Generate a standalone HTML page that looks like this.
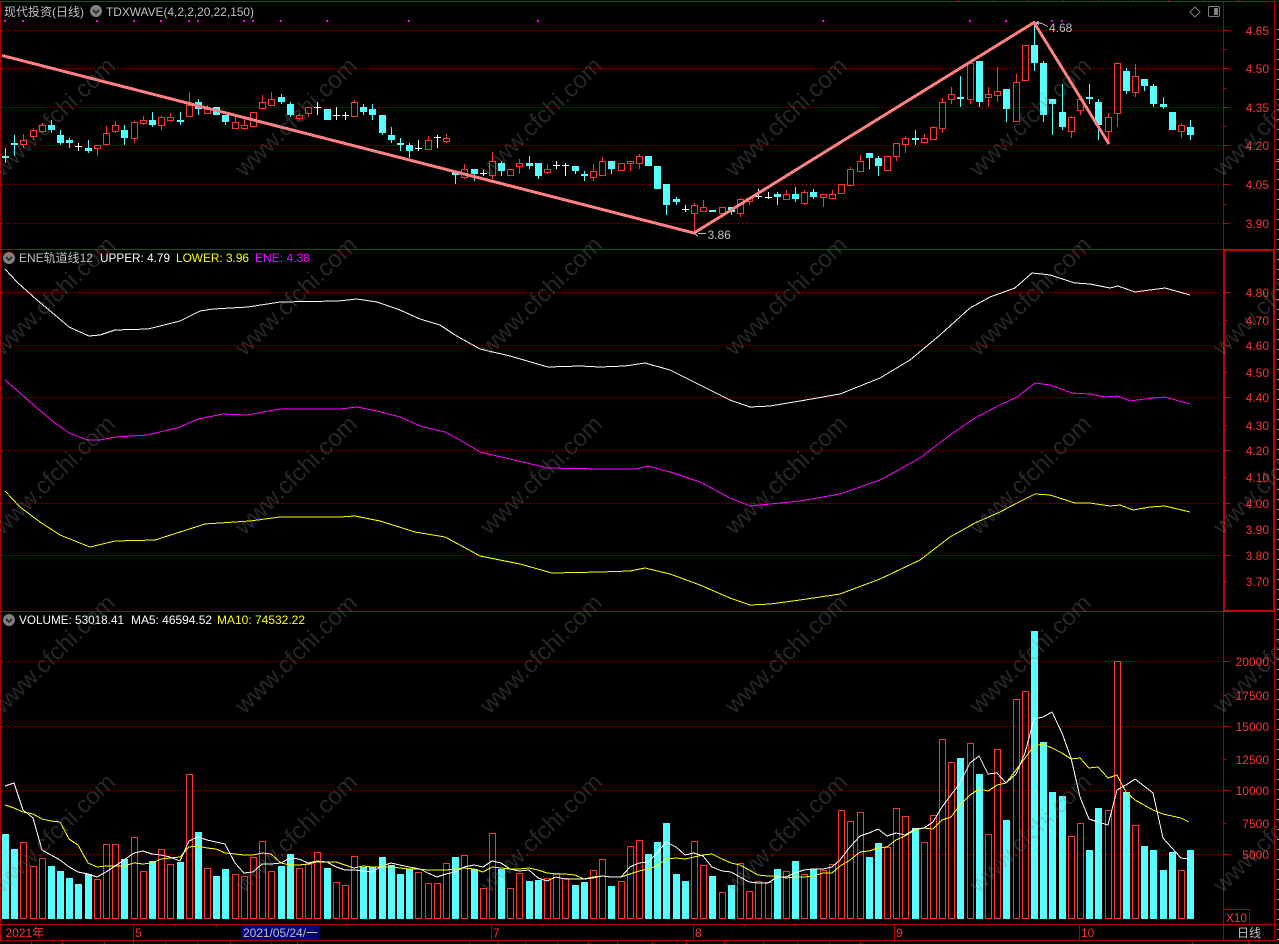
<!DOCTYPE html>
<html lang="zh-CN">
<head>
<meta charset="utf-8">
<title>现代投资(日线)</title>
<style>
html,body{margin:0;padding:0;background:#000;width:1279px;height:944px;overflow:hidden}
svg{display:block;position:absolute;left:0;top:0}
text{font-family:"Liberation Sans","Noto Sans CJK SC",sans-serif;font-size:12px}
.wm text{font-size:24px}
</style>
</head>
<body>
<svg width="1279" height="944" viewBox="0 0 1279 944" xmlns="http://www.w3.org/2000/svg" shape-rendering="crispEdges">
<rect width="1279" height="944" fill="#000"/>

<!-- grid dotted -->
<path fill="none" stroke="#b40000" stroke-dasharray="1 3" d="M2 30.5H1220M2 68.5H1220M2 107.5H1220M2 145.5H1220M2 184.5H1220M2 223.5H1220M2 292.5H1220M2 345.5H1220M2 397.5H1220M2 450.5H1220M2 503.5H1220M2 555.5H1220M2 661.5H1220M2 726.5H1220M2 790.5H1220M2 854.5H1220"/>

<!-- frame -->
<path fill="none" stroke="#a80000" d="M0 1.5H1275M.5 1V941M0 249.5H1224M0 611.5H1224M1223.5 1V941M1274.5 1V941M0 924.5H1275M0 940.5H1275M1224 909.5H1249.5V924M133.5 925V940M491.5 925V940M693.5 925V940M894.5 925V940M1079.5 925V940M1192.5 941V944M1248.5 941V944M174.5 925V927M216.5 925V927M346.5 925V927M395.5 925V927M443.5 925V927M542.5 925V927M643.5 925V927M744.5 925V927M794.5 925V927M941.5 925V927M988.5 925V927M31.5 941V944M62.5 941V944M104.5 941V944M133.5 941V944M165.5 941V944M197.5 941V944M230.5 941V944M271.5 941V944M297.5 941V944M469.5 941V944M498.5 941V944M525.5 941V944M557.5 941V944M588.5 941V944M617.5 941V944M652.5 941V944M686.5 941V944M724.5 941V944M763.5 941V944M797.5 941V944M829.5 941V944M860.5 941V944"/>
<path fill="none" stroke="#a80000" stroke-dasharray="1 34" d="M958 .5H1275"/>
<rect x="1224" y="250" width="50" height="361" fill="none" stroke="#c40000" stroke-width="2"/>

<!-- axis ticks -->
<path fill="none" stroke="#c80000" d="M1224 30.5h5M1224 49.5h2M1224 68.5h5M1224 88.5h2M1224 107.5h5M1224 126.5h2M1224 145.5h5M1224 165.5h2M1224 184.5h5M1224 204.5h2M1224 223.5h5M1225 292.5h5M1225 320.5h2M1225 345.5h5M1225 372.5h2M1225 397.5h5M1225 425.5h2M1225 450.5h5M1225 477.5h2M1225 503.5h5M1225 529.5h2M1225 555.5h5M1225 581.5h2M1224 661.5h5M1224 695.5h2M1224 726.5h5M1224 759.5h2M1224 790.5h5M1224 823.5h2M1224 854.5h5"/>
<path fill="none" stroke="#b0b0b0" stroke-width="2" stroke-dasharray="1 9" d="M1278 29V941"/>
<path fill="none" stroke="#e0a000" d="M1276 161.5h3"/>

<!-- magenta dots -->
<path fill="#ff00ff" d="M4 20h2v2h-2zM22 20h2v2h-2zM96 20h2v2h-2zM133 20h2v2h-2zM160 20h2v2h-2zM188 20h2v2h-2zM197 20h2v2h-2zM243 20h2v2h-2zM252 20h2v2h-2zM280 20h2v2h-2zM326 20h2v2h-2zM408 20h2v2h-2zM537 20h2v2h-2zM822 20h2v2h-2zM969 20h2v2h-2zM1005 20h2v2h-2zM1051 20h2v2h-2zM1061 20h2v2h-2z"/>

<!-- candles: cyan -->
<path fill="none" stroke="#55ffff" d="M5.5 148V163M14.5 135V156M51.5 120V133M60.5 130V145M69.5 138V148M88.5 140V153M124.5 125V145M152.5 112V127M180.5 112V125M198.5 99V115M225.5 115V125M281.5 94V104M290.5 102V117M363.5 104V115M372.5 104V120M382.5 115V135M391.5 127V143M400.5 138V151M409.5 143V158M455.5 172V184M474.5 169V181M501.5 161V176M529.5 156V169M538.5 163V179M575.5 166V174M584.5 171V181M611.5 161V174M666.5 184V215M676.5 197V205M731.5 207V215M777.5 192V205M795.5 187V202M813.5 189V199M869.5 153V169M878.5 156V176M915.5 130V145M960.5 76V107M979.5 61V107M1006.5 89V122M1034.5 22V71M1043.5 61V122M1052.5 99V135M1062.5 84V130M1089.5 84V104M1098.5 99V140M1126.5 68V94M1144.5 79V91M1153.5 84V107M1163.5 97V109M1190.5 120V140"/>
<path fill="#55ffff" d="M2 156h7v2h-7zM11 143h7v2h-7zM48 125h7v5h-7zM57 135h7v8h-7zM66 140h7v3h-7zM85 148h7v3h-7zM121 130h7v8h-7zM149 120h7v5h-7zM177 120h7v2h-7zM195 102h7v7h-7zM213 107h7v8h-7zM222 115h7v7h-7zM278 97h7v5h-7zM287 104h7v11h-7zM324 109h7v11h-7zM360 107h7v5h-7zM369 109h7v6h-7zM379 115h7v18h-7zM388 135h7v5h-7zM397 143h7v2h-7zM406 145h7v6h-7zM452 172h7v3h-7zM471 169h7v5h-7zM498 163h7v8h-7zM526 163h7v3h-7zM535 163h7v13h-7zM572 166h7v5h-7zM581 174h7v2h-7zM608 161h7v8h-7zM645 156h7v10h-7zM654 166h7v23h-7zM663 184h7v21h-7zM673 199h7v3h-7zM709 210h7v2h-7zM728 207h7v5h-7zM774 194h7v3h-7zM792 194h7v5h-7zM810 192h7v5h-7zM866 153h7v5h-7zM875 158h7v8h-7zM912 138h7v2h-7zM957 97h7v2h-7zM976 61h7v41h-7zM1003 89h7v20h-7zM1031 45h7v18h-7zM1040 63h7v52h-7zM1049 99h7v5h-7zM1059 112h7v15h-7zM1086 97h7v2h-7zM1095 102h7v23h-7zM1123 71h7v20h-7zM1141 79h7v7h-7zM1150 86h7v18h-7zM1160 104h7v3h-7zM1169 112h7v18h-7zM1187 127h7v8h-7z"/>

<!-- candles: white cross -->
<path fill="none" stroke="#ffffff" d="M78.5 143V151M75 146.5h7M317.5 102V115M314 107.5h7M336.5 107V120M333 115.5h7M345.5 112V120M342 115.5h7M418.5 140V151M415 148.5h7M437.5 135V148M434 137.5h7M483.5 170V176M480 173.5h7M556.5 161V169M553 165.5h7M565.5 163V176M562 165.5h7M685.5 205V212M682 209.5h7M758.5 189V199M755 196.5h7M768.5 192V199M765 197.5h7"/>

<!-- candles: red hollow -->
<path fill="none" stroke="#ff3232" d="M23.5 134V140M23.5 144V148M20.5 140.5h6v4h-6zM33.5 128V130M33.5 136V140M30.5 130.5h6v6h-6zM42.5 123V125M42.5 131V133M39.5 125.5h6v6h-6zM97.5 148V156M94.5 145.5h6v3h-6zM106.5 126V133M103.5 133.5h6v11h-6zM115.5 121V125M115.5 131V133M112.5 125.5h6v6h-6zM134.5 121V122M134.5 138V143M131.5 122.5h6v16h-6zM143.5 116V120M143.5 123V125M140.5 120.5h6v3h-6zM161.5 116V117M161.5 125V130M158.5 117.5h6v8h-6zM170.5 113V117M170.5 120V122M167.5 117.5h6v3h-6zM189.5 92V105M189.5 116V117M186.5 105.5h6v11h-6zM207.5 105V109M207.5 113V114M204.5 109.5h6v4h-6zM235.5 115V122M232.5 122.5h6v6h-6zM244.5 118V125M244.5 128V130M241.5 125.5h6v3h-6zM250.5 112.5h6v14h-6zM262.5 95V102M262.5 108V109M259.5 102.5h6v6h-6zM271.5 92V99M271.5 105V106M268.5 99.5h6v6h-6zM299.5 113V115M299.5 118V120M296.5 115.5h6v3h-6zM308.5 113V117M305.5 107.5h6v6h-6zM354.5 100V102M354.5 116V117M351.5 102.5h6v14h-6zM428.5 136V140M425.5 140.5h6v9h-6zM446.5 134V138M446.5 141V143M443.5 138.5h6v3h-6zM464.5 164V169M464.5 177V179M461.5 169.5h6v8h-6zM492.5 152V161M492.5 175V179M489.5 161.5h6v14h-6zM507.5 169.5h6v6h-6zM519.5 159V163M519.5 166V174M516.5 163.5h6v3h-6zM547.5 164V169M547.5 172V174M544.5 169.5h6v3h-6zM593.5 164V171M593.5 177V181M590.5 171.5h6v6h-6zM602.5 157V161M599.5 161.5h6v14h-6zM618.5 163.5h6v7h-6zM630.5 163V171M627.5 161.5h6v2h-6zM639.5 154V156M639.5 163V169M636.5 156.5h6v7h-6zM694.5 203V205M694.5 213V234M691.5 205.5h6v8h-6zM703.5 200V207M703.5 211V212M700.5 207.5h6v4h-6zM719.5 207.5h6v6h-6zM740.5 198V199M740.5 213V217M737.5 199.5h6v14h-6zM749.5 201V205M746.5 198.5h6v3h-6zM786.5 190V194M783.5 194.5h6v5h-6zM804.5 190V192M804.5 203V205M801.5 192.5h6v11h-6zM823.5 197V207M820.5 194.5h6v3h-6zM832.5 190V194M832.5 198V199M829.5 194.5h6v4h-6zM838.5 184.5h6v9h-6zM850.5 167V169M850.5 185V186M847.5 169.5h6v16h-6zM860.5 155V161M860.5 171V172M857.5 161.5h6v10h-6zM884.5 156.5h6v14h-6zM896.5 156V161M893.5 143.5h6v13h-6zM905.5 136V138M905.5 144V153M902.5 138.5h6v6h-6zM924.5 134V138M924.5 142V143M921.5 138.5h6v4h-6zM933.5 126V127M930.5 127.5h6v12h-6zM942.5 98V102M942.5 128V133M939.5 102.5h6v26h-6zM951.5 87V94M951.5 99V104M948.5 94.5h6v5h-6zM970.5 60V63M970.5 99V104M967.5 63.5h6v36h-6zM988.5 87V94M988.5 97V107M985.5 94.5h6v3h-6zM997.5 67V91M997.5 95V102M994.5 91.5h6v4h-6zM1016.5 74V82M1013.5 82.5h6v39h-6zM1022.5 45.5h6v35h-6zM1071.5 116V117M1071.5 131V138M1068.5 117.5h6v14h-6zM1080.5 110V115M1077.5 99.5h6v11h-6zM1108.5 113V117M1108.5 131V142M1105.5 117.5h6v14h-6zM1117.5 62V63M1117.5 113V127M1114.5 63.5h6v50h-6zM1135.5 64V76M1135.5 92V97M1132.5 76.5h6v16h-6zM1181.5 123V125M1181.5 131V138M1178.5 125.5h6v6h-6z"/>

<!-- zigzag -->
<path fill="none" stroke="#ff8080" stroke-width="3" d="M2 55.5L694 233L1034 22.5L1109 144"/>
<path fill="none" stroke="#c0c0c0" d="M698 233.5h8M695 233.5l3-2M695 233.5l3 3M1037 22.5l5 1l6 3M1036 22.5l3-1M1036 22.5l3 2"/>

<!-- ENE lines -->
<path fill="none" stroke="#ffffff" d="M5 269L17 282L37 300L55 315L69 327L89 336L100 335L115 330L148 329L180 321L200 311L213 309L248 307L280 302L338 301L357 299L377 302L400 310L420 319L440 325L455 335L480 349L510 356L548 367L580 366L600 367L625 366L645 363L670 370L700 385L730 400L750 407L770 406L800 401L840 394L880 378L910 360L940 335L970 308L990 297L1015 288L1032 273L1050 275L1075 283L1090 284L1110 288L1118 286L1135 292L1165 288L1190 295"/>
<path fill="none" stroke="#ff00ff" d="M5 380L37 408L55 423L69 433L87 440L100 440L115 437L147 435L180 427L198 419L223 414L247 415L280 409L340 409L357 407L377 411L400 417L420 426L445 432L460 440L480 452L510 459L548 468L600 469L635 469L648 466L670 472L700 482L730 498L750 506L770 504L800 501L840 494L880 480L920 458L950 435L975 418L1000 405L1017 397L1035 383L1050 385L1072 393L1090 394L1105 397L1118 396L1130 401L1145 399L1165 397L1190 404"/>
<path fill="none" stroke="#ffff00" d="M5 491L20 507L40 522L60 535L75 541L90 547L115 541L155 540L180 532L205 524L250 521L280 517L340 517L355 516L380 521L415 532L445 537L460 545L480 556L520 564L552 573L600 572L630 571L645 568L670 574L700 585L730 598L750 605L770 604L800 600L840 594L880 579L920 560L950 537L975 523L1000 512L1017 503L1035 494L1050 495L1075 503L1090 503L1110 506L1120 505L1133 510L1150 507L1165 506L1190 512"/>

<!-- volume: cyan -->
<path fill="#55ffff" d="M2 834h7V919h-7zM11 849h7V919h-7zM48 866h7V919h-7zM57 871h7V919h-7zM66 878h7V919h-7zM75 884h7V919h-7zM85 874h7V919h-7zM121 859h7V919h-7zM149 861h7V919h-7zM177 862h7V919h-7zM195 832h7V919h-7zM213 876h7V919h-7zM222 869h7V919h-7zM278 866h7V919h-7zM287 854h7V919h-7zM324 868h7V919h-7zM360 867h7V919h-7zM369 867h7V919h-7zM379 857h7V919h-7zM388 865h7V919h-7zM397 874h7V919h-7zM406 869h7V919h-7zM452 857h7V919h-7zM471 869h7V919h-7zM498 869h7V919h-7zM526 881h7V919h-7zM535 880h7V919h-7zM572 885h7V919h-7zM581 882h7V919h-7zM608 886h7V919h-7zM645 854h7V919h-7zM654 842h7V919h-7zM663 823h7V919h-7zM673 874h7V919h-7zM682 881h7V919h-7zM709 876h7V919h-7zM728 885h7V919h-7zM774 869h7V919h-7zM792 861h7V919h-7zM810 869h7V919h-7zM866 857h7V919h-7zM875 843h7V919h-7zM912 828h7V919h-7zM957 758h7V919h-7zM976 774h7V919h-7zM1003 820h7V919h-7zM1031 631h7V919h-7zM1040 742h7V919h-7zM1049 792h7V919h-7zM1059 796h7V919h-7zM1086 850h7V919h-7zM1095 808h7V919h-7zM1123 792h7V919h-7zM1141 846h7V919h-7zM1150 850h7V919h-7zM1160 870h7V919h-7zM1169 852h7V919h-7zM1187 850h7V919h-7z"/>
<!-- volume: red -->
<path fill="none" stroke="#ff3232" d="M20.5 842.5h6V918.5h-6zM30.5 866.5h6V918.5h-6zM39.5 858.5h6V918.5h-6zM94.5 879.5h6V918.5h-6zM103.5 844.5h6V918.5h-6zM112.5 844.5h6V918.5h-6zM131.5 837.5h6V918.5h-6zM140.5 871.5h6V918.5h-6zM158.5 849.5h6V918.5h-6zM167.5 864.5h6V918.5h-6zM186.5 774.5h6V918.5h-6zM204.5 868.5h6V918.5h-6zM232.5 874.5h6V918.5h-6zM241.5 876.5h6V918.5h-6zM250.5 857.5h6V918.5h-6zM259.5 841.5h6V918.5h-6zM268.5 871.5h6V918.5h-6zM296.5 868.5h6V918.5h-6zM305.5 864.5h6V918.5h-6zM314.5 852.5h6V918.5h-6zM333.5 882.5h6V918.5h-6zM342.5 885.5h6V918.5h-6zM351.5 856.5h6V918.5h-6zM415.5 872.5h6V918.5h-6zM425.5 883.5h6V918.5h-6zM434.5 883.5h6V918.5h-6zM443.5 863.5h6V918.5h-6zM461.5 855.5h6V918.5h-6zM480.5 888.5h6V918.5h-6zM489.5 833.5h6V918.5h-6zM507.5 888.5h6V918.5h-6zM516.5 873.5h6V918.5h-6zM544.5 878.5h6V918.5h-6zM553.5 873.5h6V918.5h-6zM562.5 878.5h6V918.5h-6zM590.5 870.5h6V918.5h-6zM599.5 859.5h6V918.5h-6zM618.5 881.5h6V918.5h-6zM627.5 846.5h6V918.5h-6zM636.5 840.5h6V918.5h-6zM691.5 841.5h6V918.5h-6zM700.5 865.5h6V918.5h-6zM719.5 892.5h6V918.5h-6zM737.5 863.5h6V918.5h-6zM746.5 891.5h6V918.5h-6zM755.5 881.5h6V918.5h-6zM765.5 882.5h6V918.5h-6zM783.5 871.5h6V918.5h-6zM801.5 874.5h6V918.5h-6zM820.5 870.5h6V918.5h-6zM829.5 864.5h6V918.5h-6zM838.5 810.5h6V918.5h-6zM847.5 821.5h6V918.5h-6zM857.5 812.5h6V918.5h-6zM884.5 847.5h6V918.5h-6zM893.5 808.5h6V918.5h-6zM902.5 816.5h6V918.5h-6zM921.5 842.5h6V918.5h-6zM930.5 815.5h6V918.5h-6zM939.5 739.5h6V918.5h-6zM948.5 762.5h6V918.5h-6zM967.5 743.5h6V918.5h-6zM985.5 834.5h6V918.5h-6zM994.5 749.5h6V918.5h-6zM1013.5 699.5h6V918.5h-6zM1022.5 691.5h6V918.5h-6zM1068.5 836.5h6V918.5h-6zM1077.5 823.5h6V918.5h-6zM1105.5 810.5h6V918.5h-6zM1114.5 661.5h6V918.5h-6zM1132.5 825.5h6V918.5h-6zM1178.5 870.5h6V918.5h-6z"/>

<!-- MA10 -->
<path fill="none" stroke="#ffff00" d="M5 805L14 808L23 812L33 814L42 819L51 821L60 822L69 839L78 845L88 863L97 867L106 866L115 866L124 866L134 863L143 864L152 863L161 859L170 858L180 857L189 847L198 846L207 848L216 849L225 853L235 854L244 855L253 855L262 853L271 854L281 863L290 865L299 865L308 864L317 862L327 862L336 862L345 865L354 868L363 866L372 867L382 867L391 867L400 868L409 869L418 869L428 870L437 870L446 870L455 869L464 868L474 869L483 872L492 867L501 868L510 869L519 869L529 868L538 870L547 873L556 874L565 874L575 875L584 879L593 877L602 876L611 877L621 877L630 874L639 871L648 869L657 866L666 859L676 858L685 859L694 857L703 855L712 854L722 859L731 863L740 865L749 870L758 875L768 876L777 876L786 878L795 877L804 877L813 876L823 873L832 873L840 866L850 860L860 852L869 851L878 848L887 847L896 840L905 836L915 830L924 828L933 829L942 820L951 817L960 805L970 795L979 789L988 791L997 785L1006 783L1016 770L1025 758L1034 746L1043 744L1052 748L1062 753L1071 759L1080 758L1089 768L1098 767L1108 778L1117 775L1126 792L1135 800L1144 805L1153 810L1163 814L1172 816L1181 818L1189 822"/>
<!-- MA5 -->
<path fill="none" stroke="#ffffff" d="M5 786L14 783L23 810L33 818L42 850L51 855L60 860L69 867L78 872L88 874L97 877L106 872L115 866L124 860L134 853L143 851L152 854L161 855L170 857L180 861L189 841L198 837L207 840L216 842L225 844L235 863L244 873L253 872L262 864L271 864L281 863L290 858L299 859L308 863L317 861L327 862L336 867L345 870L354 870L363 871L372 872L382 866L391 863L400 865L409 867L420 869L428 873L437 877L446 874L455 872L464 867L474 865L483 867L492 861L501 863L510 869L519 871L529 870L538 878L547 881L556 877L565 879L575 879L584 879L593 878L602 876L611 877L621 877L630 867L639 863L648 862L657 853L666 842L676 847L685 855L694 853L703 856L712 867L722 871L731 872L740 877L749 882L758 883L768 883L777 877L786 877L795 873L804 870L813 869L823 869L832 867L840 860L850 847L860 836L869 833L878 829L887 836L896 833L905 835L915 829L924 828L933 822L942 807L951 795L960 783L970 763L979 756L988 774L997 773L1006 783L1016 774L1025 753L1034 719L1043 717L1052 712L1062 733L1071 758L1080 797L1089 819L1098 822L1108 825L1117 790L1126 785L1135 779L1144 786L1153 793L1163 838L1172 848L1181 858L1189 859"/>

<!-- date box -->
<rect x="241" y="925" width="78" height="15" fill="#000080"/>

<!-- top labels -->
<g shape-rendering="auto">
<circle cx="96" cy="11" r="6" fill="#808080"/>
<path d="M93 10l3 3l3-3" fill="none" stroke="#222" stroke-width="1.6"/>
<circle cx="9" cy="258" r="6" fill="#808080"/>
<path d="M6 257l3 3l3-3" fill="none" stroke="#222" stroke-width="1.6"/>
<circle cx="9" cy="620" r="6" fill="#808080"/>
<path d="M6 619l3 3l3-3" fill="none" stroke="#222" stroke-width="1.6"/>
<path d="M1195 7l5 5l-5 5l-5-5z" fill="none" stroke="#808080"/>
<rect x="1208.5" y="6.5" width="11" height="10" rx="1.5" fill="none" stroke="#808080" stroke-width="1"/>
<rect x="1214" y="8" width="4" height="7" fill="#808080"/>
</g>

<g fill="#c0c0c0">
<text x="4" y="16">现代投资(日线)</text>
<text x="106" y="16" textLength="148" lengthAdjust="spacingAndGlyphs">TDXWAVE(4,2,2,20,22,150)</text>
<text x="19" y="262" textLength="74">ENE轨道线12</text>
<text x="707.5" y="239">3.86</text>
<text x="1049" y="32">4.68</text>
<text x="1237" y="937">日线</text>
<text x="243" y="937" textLength="75">2021/05/24/一</text>
</g>
<text x="100" y="262" fill="#ffffff" textLength="70" lengthAdjust="spacingAndGlyphs">UPPER: 4.79</text>
<text x="176" y="262" fill="#ffff00" textLength="73" lengthAdjust="spacingAndGlyphs">LOWER: 3.96</text>
<text x="255" y="262" fill="#ff00ff" textLength="55" lengthAdjust="spacingAndGlyphs">ENE: 4.38</text>
<text x="19" y="624" fill="#ffffff" textLength="105" lengthAdjust="spacingAndGlyphs">VOLUME: 53018.41</text>
<text x="131" y="624" fill="#ffffff" textLength="81" lengthAdjust="spacingAndGlyphs">MA5: 46594.52</text>
<text x="217" y="624" fill="#ffff00" textLength="88" lengthAdjust="spacingAndGlyphs">MA10: 74532.22</text>

<!-- axis labels -->
<g fill="#ff3232" text-anchor="end">
<text x="1269" y="35">4.65</text>
<text x="1269" y="73">4.50</text>
<text x="1269" y="112">4.35</text>
<text x="1269" y="150">4.20</text>
<text x="1269" y="189">4.05</text>
<text x="1269" y="228">3.90</text>
<text x="1269" y="297">4.80</text>
<text x="1269" y="325">4.70</text>
<text x="1269" y="350">4.60</text>
<text x="1269" y="377">4.50</text>
<text x="1269" y="402">4.40</text>
<text x="1269" y="430">4.30</text>
<text x="1269" y="455">4.20</text>
<text x="1269" y="482">4.10</text>
<text x="1269" y="508">4.00</text>
<text x="1269" y="534">3.90</text>
<text x="1269" y="560">3.80</text>
<text x="1269" y="586">3.70</text>
<text x="1269" y="666">20000</text>
<text x="1269" y="700">17500</text>
<text x="1269" y="731">15000</text>
<text x="1269" y="764">12500</text>
<text x="1269" y="795">10000</text>
<text x="1269" y="828">7500</text>
<text x="1269" y="859">5000</text>
</g>
<g fill="#ff3232">
<text x="5.5" y="937">2021年</text>
<text x="135" y="937">5</text>
<text x="493" y="937">7</text>
<text x="695" y="937">8</text>
<text x="896" y="937">9</text>
<text x="1081" y="937">10</text>
<text x="1226" y="922" textLength="21" lengthAdjust="spacingAndGlyphs">X10</text>
</g>

<!-- watermark -->
<g class="wm" fill="#808080" fill-opacity=".3" text-anchor="middle">
<text transform="translate(54,117) rotate(-44) translate(0,8)">www.cfchi.com</text>
<text transform="translate(296,117) rotate(-44) translate(0,8)">www.cfchi.com</text>
<text transform="translate(541,117) rotate(-44) translate(0,8)">www.cfchi.com</text>
<text transform="translate(786,117) rotate(-44) translate(0,8)">www.cfchi.com</text>
<text transform="translate(1030,117) rotate(-44) translate(0,8)">www.cfchi.com</text>
<text transform="translate(1274,117) rotate(-44) translate(0,8)">www.cfchi.com</text>
<text transform="translate(54,296) rotate(-44) translate(0,8)">www.cfchi.com</text>
<text transform="translate(296,296) rotate(-44) translate(0,8)">www.cfchi.com</text>
<text transform="translate(541,296) rotate(-44) translate(0,8)">www.cfchi.com</text>
<text transform="translate(786,296) rotate(-44) translate(0,8)">www.cfchi.com</text>
<text transform="translate(1030,296) rotate(-44) translate(0,8)">www.cfchi.com</text>
<text transform="translate(1274,296) rotate(-44) translate(0,8)">www.cfchi.com</text>
<text transform="translate(54,475) rotate(-44) translate(0,8)">www.cfchi.com</text>
<text transform="translate(296,475) rotate(-44) translate(0,8)">www.cfchi.com</text>
<text transform="translate(541,475) rotate(-44) translate(0,8)">www.cfchi.com</text>
<text transform="translate(786,475) rotate(-44) translate(0,8)">www.cfchi.com</text>
<text transform="translate(1030,475) rotate(-44) translate(0,8)">www.cfchi.com</text>
<text transform="translate(1274,475) rotate(-44) translate(0,8)">www.cfchi.com</text>
<text transform="translate(54,654) rotate(-44) translate(0,8)">www.cfchi.com</text>
<text transform="translate(296,654) rotate(-44) translate(0,8)">www.cfchi.com</text>
<text transform="translate(541,654) rotate(-44) translate(0,8)">www.cfchi.com</text>
<text transform="translate(786,654) rotate(-44) translate(0,8)">www.cfchi.com</text>
<text transform="translate(1030,654) rotate(-44) translate(0,8)">www.cfchi.com</text>
<text transform="translate(1274,654) rotate(-44) translate(0,8)">www.cfchi.com</text>
<text transform="translate(54,833) rotate(-44) translate(0,8)">www.cfchi.com</text>
<text transform="translate(296,833) rotate(-44) translate(0,8)">www.cfchi.com</text>
<text transform="translate(541,833) rotate(-44) translate(0,8)">www.cfchi.com</text>
<text transform="translate(786,833) rotate(-44) translate(0,8)">www.cfchi.com</text>
<text transform="translate(1030,833) rotate(-44) translate(0,8)">www.cfchi.com</text>
<text transform="translate(1274,833) rotate(-44) translate(0,8)">www.cfchi.com</text>
</g>
</svg>
</body>
</html>
